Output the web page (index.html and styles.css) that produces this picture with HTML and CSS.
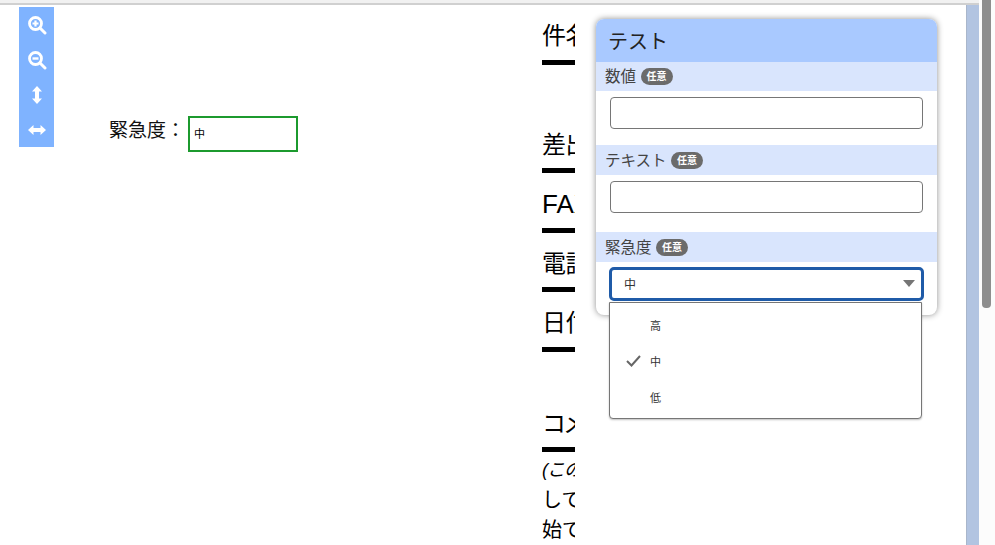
FILE: index.html
```html
<!DOCTYPE html>
<html lang="ja">
<head>
    <meta charset="UTF-8">
    <meta name="viewport" content="width=device-width, initial-scale=1.0">
    <title>テスト</title>
    <link rel="stylesheet" href="styles.css">
</head>
<body>

    <div class="page">
        <div class="main">
            <div class="topbar"></div>
            <div class="content">
                <div class="viewer">
                    <div class="toolbar">
                        <button class="tool">
                            <svg width="20" height="20" viewBox="0 0 20 20"><circle cx="8.5" cy="8.5" r="6" fill="none" stroke="#fff" stroke-width="2.800"/><path d="M13 13l5 5" fill="none" stroke="#fff" stroke-width="3" stroke-linecap="round"/><path d="M8.500 5.500v6M5.500 8.500h6" fill="none" stroke="#fff" stroke-width="2.200"/></svg>
                        </button>
                        <button class="tool">
                            <svg width="20" height="20" viewBox="0 0 20 20"><circle cx="8.5" cy="8.5" r="6" fill="none" stroke="#fff" stroke-width="2.800"/><path d="M13 13l5 5" fill="none" stroke="#fff" stroke-width="3" stroke-linecap="round"/><path d="M5.500 8.500h6" fill="none" stroke="#fff" stroke-width="2.400"/></svg>
                        </button>
                        <button class="tool">
                            <svg width="20" height="20" viewBox="0 0 20 20"><path d="M10 1l5 5.500h-3v7h3L10 19l-5-5.500h3v-7H5z" fill="#fff"/></svg>
                        </button>
                        <button class="tool">
                            <svg width="20" height="20" viewBox="0 0 20 20"><path d="M1 10l5.500-5v3h7V5l5.500 5-5.500 5v-3h-7v3z" fill="#fff"/></svg>
                        </button>
                    </div>

                    <div class="field">
                        <span class="field-label">緊急度：</span>
                        <div class="field-box">中</div>
                    </div>

                    <div class="doc">
                        <h2 class="doc-head">件名</h2>
                        <h2 class="doc-head gap-large">差出人</h2>
                        <h2 class="doc-head head-latin">FAX番号</h2>
                        <h2 class="doc-head">電話番号</h2>
                        <h2 class="doc-head">日付</h2>
                        <h2 class="doc-head gap-medium head-tight">コメント</h2>
                        <p class="doc-text"><em>(このフォームは</em><br>してください。<br>始でお願いします</p>
                    </div>

                    <div class="panel">
                        <div class="panel-title">テスト</div>

                        <div class="row-label row-first">数値<span class="badge">任意</span></div>
                        <div class="row-body body-first"><input class="text-input" type="text"></div>

                        <div class="row-label">テキスト<span class="badge">任意</span></div>
                        <div class="row-body body-second"><input class="text-input" type="text"></div>

                        <div class="row-label">緊急度<span class="badge">任意</span></div>
                        <div class="row-body body-select">
                            <div class="select">
                                <span>中</span>
                                <svg width="12" height="7" viewBox="0 0 12 7"><path d="M0 0h12L6 7z" fill="#757575"/></svg>
                                <div class="menu">
                                    <div class="option"><span class="check"></span>高</div>
                                    <div class="option">
                                        <span class="check">
                                            <svg width="15" height="12" viewBox="0 0 15 12"><path d="M1 6l4.500 4.500L14 1" fill="none" stroke="#666" stroke-width="2"/></svg>
                                        </span>中
                                    </div>
                                    <div class="option"><span class="check"></span>低</div>
                                </div>
                            </div>
                        </div>
                    </div>
                </div>
                <div class="strip"></div>
            </div>
        </div>
        <div class="scrollbar">
            <div class="thumb"></div>
        </div>
    </div>

</body>
</html>
```

FILE: styles.css
```css
body {
    margin: 0;
    font-family: "Liberation Sans", "Noto Sans CJK JP", sans-serif;
    background-color: #fff;
    color: #000;
    overflow: hidden;
}

.page {
    display: flex;
    height: 545px;
}

.main {
    display: flex;
    flex-direction: column;
    width: 979px;
}

.topbar {
    height: 3px;
    background-color: #f1f1f1;
    border-bottom: 2px solid #d0d0d0;
}

.content {
    display: flex;
    flex: 1;
    min-height: 0;
}

.viewer {
    display: flex;
    align-items: flex-start;
    flex: 1;
    overflow: hidden;
}

.strip {
    width: 12px;
    background-color: #b2c4e1;
    border-left: 1px solid #a9b6cb;
}

.scrollbar {
    flex: 1;
    padding-left: 3px;
    background-color: #fcfcfc;
}

.thumb {
    width: 9px;
    height: 308px;
    background-color: #8e8e8e;
    border-radius: 0 0 4px 4px;
}

/* toolbar */
.toolbar {
    display: flex;
    flex-direction: column;
    width: 35px;
    margin: 2px 0 0 19px;
    background-color: #7fb3ff;
}

.tool {
    display: flex;
    justify-content: center;
    align-items: center;
    height: 35px;
    padding: 0;
    border: 0;
    background: none;
}

/* form field on the page */
.field {
    display: flex;
    align-items: center;
    flex-shrink: 0;
    width: 189px;
    margin: 111px 0 0 55px;
}

.field-label {
    width: 79px;
    font-size: 19px;
    line-height: 26px;
    margin-bottom: 7px;
    color: #111;
}

.field-box {
    box-sizing: border-box;
    flex-shrink: 0;
    width: 110px;
    height: 36px;
    padding: 8px 0 0 4px;
    border: 2px solid #1c9a2e;
    font-size: 11px;
    line-height: 16px;
}

/* document behind the panel */
.doc {
    flex-shrink: 0;
    width: 33px;
    margin-left: 244px;
    overflow: hidden;
    white-space: nowrap;
}

.doc-head {
    box-sizing: border-box;
    height: 59.500px;
    margin: 0;
    padding-top: 13px;
    border-bottom: 5px solid #000;
    font-size: 24px;
    font-weight: 400;
    line-height: 36px;
    letter-spacing: -0.5px;
}

.gap-large {
    margin-top: 49px;
}

.gap-medium {
    margin-top: 41px;
}

.head-latin {
    font-size: 26px;
    letter-spacing: 0;
}

.head-tight {
    letter-spacing: -3px;
}

.doc-text {
    margin: 2px 0 0;
    font-size: 20px;
    line-height: 30px;
}

.doc-text em {
    font-size: 18px;
    letter-spacing: -1px;
}

/* side panel */
.panel {
    flex-shrink: 0;
    width: 341px;
    height: 296px;
    margin: 14px 0 0 21px;
    border-radius: 8px;
    background-color: #fff;
    box-shadow: 0 0 6px rgba(0, 0, 0, 0.45);
}

.panel-title {
    height: 43px;
    padding-left: 12px;
    border-radius: 8px 8px 0 0;
    background-color: #a9c9ff;
    font-size: 20px;
    line-height: 47px;
    color: #222;
}

.row-label {
    box-sizing: border-box;
    display: flex;
    align-items: center;
    height: 30px;
    padding: 2px 0 0 9px;
    background-color: #d9e5fd;
    font-size: 15.500px;
    line-height: 28px;
    color: #444;
}

.row-first {
    height: 29px;
    padding-top: 0;
}

.badge {
    width: 32px;
    height: 17px;
    margin: -2px 0 0 4.500px;
    border-radius: 9px;
    background-color: #6b6b6b;
    color: #fff;
    font-size: 10px;
    font-weight: 700;
    line-height: 17px;
    text-align: center;
}

.row-first .badge {
    margin-top: 0;
}

.row-body {
    padding: 6px 14px 0;
}

.body-first {
    height: 48px;
}

.body-second {
    height: 51px;
}

.body-select {
    height: 48px;
    padding: 5px 13px 0;
}

.text-input {
    box-sizing: border-box;
    display: block;
    width: 313px;
    height: 32px;
    border: 1px solid #767676;
    border-radius: 4px;
    background-color: #fff;
}

.select {
    box-sizing: border-box;
    position: relative;
    display: flex;
    justify-content: space-between;
    align-items: center;
    width: 315px;
    height: 34px;
    padding: 0 6px 2px 12px;
    border: 3px solid #1f5ba8;
    border-radius: 5px;
    font-size: 12px;
    color: #333;
}

.menu {
    box-sizing: border-box;
    position: absolute;
    top: 32px;
    left: -3px;
    width: 313px;
    height: 117px;
    padding-top: 4px;
    border: 1px solid #767676;
    border-radius: 0 0 4px 4px;
    background-color: #fff;
    box-shadow: 0 1px 2px rgba(0, 0, 0, 0.25);
}

.option {
    display: flex;
    align-items: center;
    height: 36px;
    font-size: 11px;
}

.check {
    box-sizing: border-box;
    display: flex;
    justify-content: center;
    width: 40px;
    padding-left: 6px;
}
```
